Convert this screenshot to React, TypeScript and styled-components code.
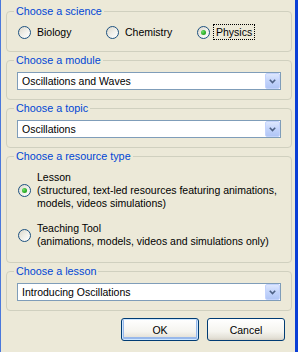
import styled, { createGlobalStyle } from 'styled-components';

const GlobalStyle = createGlobalStyle`
  html, body {
    margin: 0;
    padding: 0;
    background: #ece9d8;
  }
  body {
    font-family: 'Liberation Sans', Arial, sans-serif;
    font-size: 10.5px;
    color: #000;
  }
`;

const Window = styled.div`
  box-sizing: border-box;
  width: 298px;
  height: 352px;
  padding: 5px 3px 0 5px;
  background: #ece9d8;
  border-left: 1px solid #4a78dc;
  border-right: 3px solid #0a3fd6;
  display: flex;
  flex-direction: column;
  gap: 2px;
`;

const Group = styled.fieldset<{ $bottom?: number }>`
  margin: 0;
  min-width: 0;
  border: 1px solid #d0d0bf;
  border-radius: 4px;
  padding: 0 10px ${(p) => p.$bottom ?? 9}px 10px;
`;

const Legend = styled.legend`
  margin-left: -3px;
  padding: 0 2px;
  line-height: 13px;
  font-size: 10.8px;
  color: #0046d5;
`;

const RadioRow = styled.div`
  display: grid;
  grid-template-columns: 88px 91px auto;
  margin: 6px 0 0 1px;
  height: 16px;
  align-items: center;
`;

const Option = styled.div`
  display: flex;
  align-items: center;
  gap: 3px;
`;

const Radio = styled.span<{ $checked?: boolean }>`
  box-sizing: border-box;
  flex: none;
  width: 13px;
  height: 13px;
  border-radius: 50%;
  border: 1px solid #1c5180;
  background: linear-gradient(135deg, #dcd8cb 0%, #f2f1ec 55%, #ffffff 100%);
  display: flex;
  align-items: center;
  justify-content: center;

  &::after {
    content: '';
    display: ${(p) => (p.$checked ? 'block' : 'none')};
    width: 5px;
    height: 5px;
    border-radius: 50%;
    background: radial-gradient(circle at 35% 35%, #6fe06b 0%, #2fb02a 55%, #1a8a1a 100%);
  }
`;

const Label = styled.span<{ $focused?: boolean }>`
  padding: 1px 2px;
  border: 1px ${(p) => (p.$focused ? 'dotted #000' : 'solid transparent')};
  line-height: 12px;
  white-space: nowrap;
`;

const TypeList = styled.div`
  margin: 8px 0 0 1px;
  display: flex;
  flex-direction: column;
  gap: 12px;
`;

const TypeText = styled.div`
  padding: 0 3px;
  line-height: 13px;
  white-space: nowrap;
`;

const Combo = styled.div`
  box-sizing: border-box;
  margin-top: 5px;
  height: 18px;
  border: 1px solid #7f9db9;
  background: #fff;
  display: flex;
  align-items: stretch;
`;

const ComboText = styled.div`
  flex: 1;
  padding-left: 4px;
  line-height: 16px;
  white-space: nowrap;
  overflow: hidden;
`;

const ComboButton = styled.div`
  box-sizing: border-box;
  width: 15px;
  flex: none;
  border: 1px solid #c3d3fd;
  border-radius: 2px;
  background: linear-gradient(180deg, #dde7fe 0%, #c3d4fb 50%, #b1c6f6 100%);
  display: flex;
  align-items: center;
  justify-content: center;
`;

const Buttons = styled.div`
  margin-top: 5px;
  padding-right: 7px;
  display: flex;
  justify-content: flex-end;
  gap: 8px;
`;

const Button = styled.button<{ $default?: boolean }>`
  box-sizing: border-box;
  width: 78px;
  height: 23px;
  padding: 0;
  border: 1px solid #003c74;
  border-radius: 3px;
  font-family: 'Liberation Sans', Arial, sans-serif;
  font-size: 10.5px;
  color: #000;
  background: linear-gradient(180deg, #ffffff 0%, #f5f4ef 60%, #e3e0d6 90%, #d6d0c5 100%);
  box-shadow: ${(p) =>
    p.$default ? 'inset 0 0 0 1px #cee7ff, inset 0 -1px 0 2px #98b8ea' : 'none'};
`;

const Chevron = () => (
  <svg width="7" height="5" viewBox="0 0 7 5">
    <path d="M0.8 0.8 L3.5 3.5 L6.2 0.8" fill="none" stroke="#4d6185" strokeWidth="1.6" />
  </svg>
);

const Select = ({ value }: { value: string }) => (
  <Combo>
    <ComboText>{value}</ComboText>
    <ComboButton>
      <Chevron />
    </ComboButton>
  </Combo>
);

const sciences = [
  { name: 'Biology', checked: false },
  { name: 'Chemistry', checked: false },
  { name: 'Physics', checked: true },
];

export default function App() {
  return (
    <>
      <GlobalStyle />
      <Window>
        <Group $bottom={11}>
          <Legend>Choose a science</Legend>
          <RadioRow>
            {sciences.map((s) => (
              <Option key={s.name}>
                <Radio $checked={s.checked} />
                <Label $focused={s.checked}>{s.name}</Label>
              </Option>
            ))}
          </RadioRow>
        </Group>

        <Group>
          <Legend>Choose a module</Legend>
          <Select value="Oscillations and Waves" />
        </Group>

        <Group>
          <Legend>Choose a topic</Legend>
          <Select value="Oscillations" />
        </Group>

        <Group $bottom={14}>
          <Legend>Choose a resource type</Legend>
          <TypeList>
            <Option>
              <Radio $checked />
              <TypeText>
                Lesson
                <br />
                (structured, text-led resources featuring animations,
                <br />
                models, videos simulations)
              </TypeText>
            </Option>
            <Option>
              <Radio />
              <TypeText>
                Teaching Tool
                <br />
                (animations, models, videos and simulations only)
              </TypeText>
            </Option>
          </TypeList>
        </Group>

        <Group>
          <Legend>Choose a lesson</Legend>
          <Select value="Introducing Oscillations" />
        </Group>

        <Buttons>
          <Button $default>OK</Button>
          <Button>Cancel</Button>
        </Buttons>
      </Window>
    </>
  );
}
